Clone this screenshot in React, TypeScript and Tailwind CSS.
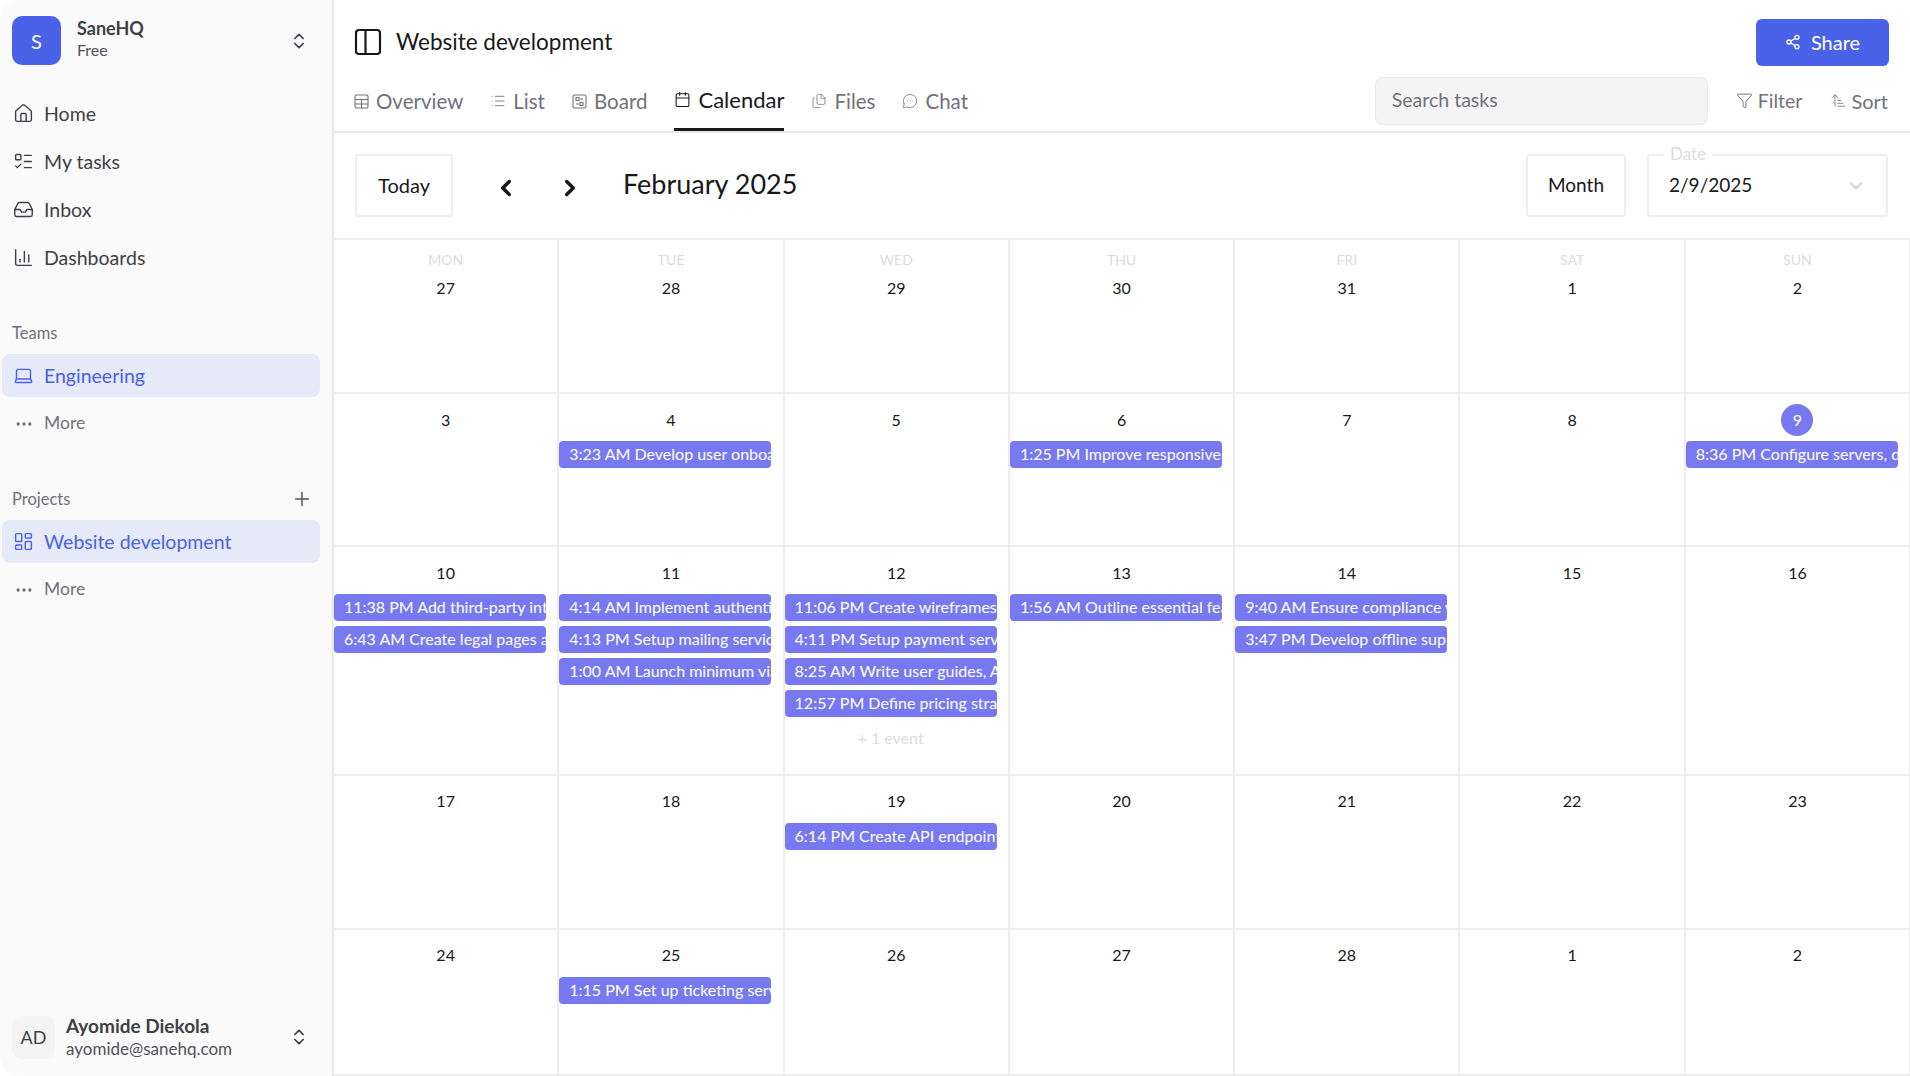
import { House, ListTodo, Inbox, ChartColumn, Laptop, LayoutDashboard, ChevronsUpDown, Ellipsis, Plus, List, Calendar, Files, MessageCircleMore, Share2, Funnel, ArrowUpNarrowWide, ChevronLeft, ChevronRight, ChevronDown } from "lucide-react";

const font = "font-['Lato','Open_Sans',sans-serif]";

function NavItem({ icon, label, active, muted }: { icon: React.ReactNode; label: string; active?: boolean; muted?: boolean }) {
  return (
    <div className={`mx-[2px] h-[43px] w-[318px] flex items-center gap-[10px] pl-[11px] rounded-[8px] ${active ? "bg-[#e5e9f8] text-[#4a62e8] text-[19.5px]" : muted ? "text-[#71717a] text-[17.5px]" : "text-[#3f3f46] text-[19.5px]"}`}>
      <span className="w-[21px] flex justify-center">{icon}</span>
      <span>{label}</span>
    </div>
  );
}

const Ev = ({ t }: { t: string }) => (
  <div className="h-[27px] w-[212px] shrink-0 rounded-[4px] bg-[#7879f1] text-white text-[16px] leading-[26px] pl-[10px] overflow-hidden whitespace-nowrap">{t}</div>
);

type Cell = { d: number; wd?: string; ev?: string[]; more?: boolean; today?: boolean };
const cells: Cell[] = [
  { d: 27, wd: "MON" }, { d: 28, wd: "TUE" }, { d: 29, wd: "WED" }, { d: 30, wd: "THU" }, { d: 31, wd: "FRI" }, { d: 1, wd: "SAT" }, { d: 2, wd: "SUN" },
  { d: 3 }, { d: 4, ev: ["3:23 AM Develop user onboarding"] }, { d: 5 }, { d: 6, ev: ["1:25 PM Improve responsiveness"] }, { d: 7 }, { d: 8 }, { d: 9, today: true, ev: ["8:36 PM Configure servers, domains"] },
  { d: 10, ev: ["11:38 PM Add third-party integrations", "6:43 AM Create legal pages and terms"] },
  { d: 11, ev: ["4:14 AM Implement authentication", "4:13 PM Setup mailing service", "1:00 AM Launch minimum viable"] },
  { d: 12, more: true, ev: ["11:06 PM Create wireframes, mockups", "4:11 PM Setup payment service", "8:25 AM Write user guides, API docs", "12:57 PM Define pricing strategy"] },
  { d: 13, ev: ["1:56 AM Outline essential features"] },
  { d: 14, ev: ["9:40 AM Ensure compliance with", "3:47 PM Develop offline support"] },
  { d: 15 }, { d: 16 },
  { d: 17 }, { d: 18 }, { d: 19, ev: ["6:14 PM Create API endpoints"] }, { d: 20 }, { d: 21 }, { d: 22 }, { d: 23 },
  { d: 24 }, { d: 25, ev: ["1:15 PM Set up ticketing service"] }, { d: 26 }, { d: 27 }, { d: 28 }, { d: 1 }, { d: 2 },
];

function Tab({ icon, label, active }: { icon: React.ReactNode; label: string; active?: boolean }) {
  return (
    <div className={`flex items-center gap-[7px] h-[54px] ${active ? "text-[22px] text-[#18181b] border-b-[3px] border-[#18181b] pb-[7px]" : "text-[20.5px] text-[#71717a] pb-[6px]"}`}>
      {icon}
      <span>{label}</span>
    </div>
  );
}

const I = "shrink-0";

export default function App() {
  return (
    <div className={`w-[1910px] h-[1076px] overflow-hidden flex bg-white ${font}`}>
      <aside className="w-[334px] shrink-0 h-full bg-[#fafafa] border-r-[2px] border-[#e8e8e8] rounded-l-[20px] flex flex-col">
        <div className="flex items-center pl-[12px] pr-[23px] pt-[16px]">
          <div className="w-[49px] h-[49px] rounded-[10px] bg-[#4a62e8] text-white text-[20px] flex items-center justify-center">S</div>
          <div className="ml-[16px] flex-1 leading-[22px] -mt-[4px]">
            <div className="text-[18px] font-bold text-[#3f3f46]">SaneHQ</div>
            <div className="text-[16px] text-[#52525b]">Free</div>
          </div>
          <ChevronsUpDown size={20} className="text-[#3f3f46]" />
        </div>
        <nav className="mt-[27px] flex flex-col gap-[5px]">
          <NavItem icon={<House size={21} strokeWidth={1.6} />} label="Home" />
          <NavItem icon={<ListTodo size={21} strokeWidth={1.6} />} label="My tasks" />
          <NavItem icon={<Inbox size={21} strokeWidth={1.6} />} label="Inbox" />
          <NavItem icon={<ChartColumn size={21} strokeWidth={1.6} />} label="Dashboards" />
        </nav>
        <div className="mt-[44px] pl-[12px] text-[16.5px] leading-[20px] text-[#71717a]">Teams</div>
        <div className="mt-[11px] flex flex-col gap-[5px]">
          <NavItem active icon={<Laptop size={21} strokeWidth={1.6} />} label="Engineering" />
          <NavItem muted icon={<Ellipsis size={20} />} label="More" />
        </div>
        <div className="mt-[44px] pl-[12px] pr-[19px] flex items-center justify-between text-[16.5px] leading-[20px] text-[#71717a] h-[20px]">
          <span>Projects</span>
          <Plus size={22} strokeWidth={1.6} className="text-[#52525b]" />
        </div>
        <div className="mt-[11px] flex flex-col gap-[5px]">
          <NavItem active icon={<LayoutDashboard size={21} strokeWidth={1.6} />} label="Website development" />
          <NavItem muted icon={<Ellipsis size={20} />} label="More" />
        </div>
        <div className="mt-auto mb-[16px] flex items-center pl-[12px] pr-[23px]">
          <div className="w-[43px] h-[43px] rounded-[10px] bg-[#f4f4f5] text-[#3f3f46] text-[18px] flex items-center justify-center">AD</div>
          <div className="ml-[11px] flex-1 leading-[23px]">
            <div className="text-[19px] font-bold text-[#3f3f46]">Ayomide Diekola</div>
            <div className="text-[17px] text-[#52525b]">ayomide@sanehq.com</div>
          </div>
          <ChevronsUpDown size={20} className="text-[#3f3f46]" />
        </div>
      </aside>

      <main className="flex-1 min-w-0 flex flex-col">
        <header className="h-[133px] shrink-0 border-b-[2px] border-[#e8e8e8] flex flex-col pl-[20px] pr-[21px]">
          <div className="h-[77px] shrink-0 flex items-start justify-between pt-[19px]">
            <div className="flex items-center gap-[14px] h-[46px] text-[#18181b]">
              <svg width="28" height="28" viewBox="0 0 28 28" fill="none" stroke="currentColor" strokeWidth="2.2"><rect x="2" y="2" width="24" height="24" rx="3" /><path d="M11.5 2v24" /></svg>
              <span className="text-[22.5px]">Website development</span>
            </div>
            <button className="w-[133px] h-[47px] rounded-[6px] bg-[#4a62e8] text-white text-[20px] flex items-center justify-center gap-[10px] pb-[2px]"><Share2 size={16} />Share</button>
          </div>
          <div className="flex items-start justify-between">
            <div className="flex gap-[27px] items-start">
              <Tab icon={<svg width="15" height="15" viewBox="0 0 15 15" fill="none" stroke="currentColor" strokeWidth="1.1"><rect x="1" y="1" width="13" height="13" rx="1.5" /><path d="M1 5.5h13M1 10h13M7.5 5.5V14" /></svg>} label="Overview" />
              <Tab icon={<List size={16} strokeWidth={1.3} className={I} />} label="List" />
              <Tab icon={<svg width="15" height="15" viewBox="0 0 15 15" fill="none" stroke="currentColor" strokeWidth="1.1"><rect x="1" y="1" width="13" height="13" rx="1.5" /><rect x="4" y="3.5" width="3" height="3" /><rect x="8" y="8.5" width="3" height="3" /><path d="M8 5h3M4 10h3" /></svg>} label="Board" />
              <Tab active icon={<Calendar size={17} strokeWidth={1.5} className={I} />} label="Calendar" />
              <Tab icon={<Files size={16} strokeWidth={1.2} className={I} />} label="Files" />
              <Tab icon={<MessageCircleMore size={16} strokeWidth={1.2} className={I} />} label="Chat" />
            </div>
            <div className="flex items-center pr-[1px]">
              <input readOnly placeholder="Search tasks" className="w-[333px] h-[48px] rounded-[8px] bg-[#f4f4f5] border border-[#e8e8e8] px-[16px] pb-[4px] text-[19.5px] placeholder:text-[#71717a] outline-none" />
              <div className="ml-[28px] flex items-center gap-[5px] text-[19.5px] text-[#71717a] pb-[1px]"><Funnel size={17} strokeWidth={1.4} />Filter</div>
              <div className="ml-[28px] flex items-center gap-[4px] text-[20px] text-[#71717a] pb-[1px]"><ArrowUpNarrowWide size={17} strokeWidth={1.2} />Sort</div>
            </div>
          </div>
        </header>

        <div className="h-[105px] shrink-0 flex items-center pl-[21px] pr-[22px]">
          <button className="w-[98px] h-[63px] rounded-[4px] border-2 border-[#eeeeee] text-[20px] text-[#18181b] pb-[1px]">Today</button>
          <ChevronLeft size={26} strokeWidth={3.2} className="ml-[40px] mt-[4px] text-[#18181b]" />
          <ChevronRight size={26} strokeWidth={3.2} className="ml-[38px] mt-[4px] text-[#18181b]" />
          <span className="ml-[40px] text-[27px] text-[#18181b] pb-[3px]">February 2025</span>
          <button className="ml-auto w-[100px] h-[63px] rounded-[4px] border-2 border-[#eeeeee] text-[19px] text-[#18181b] pb-[1px]">Month</button>
          <div className="relative ml-[21px] w-[241px] h-[63px] rounded-[4px] border-2 border-[#eeeeee] flex items-center pl-[20px] pr-[20px] text-[19px] text-[#18181b] justify-between">
            <span className="pb-[1px]">2/9/2025</span>
            <ChevronDown size={20} strokeWidth={3} className="text-[#ddd9e3]" />
            <span className="absolute -top-[12px] left-[15px] px-[6px] bg-white text-[17px] leading-[20px] text-[#dcdcdc]">Date</span>
          </div>
        </div>

        <div className="flex-1 min-h-0 grid grid-cols-[repeat(7,225.3px)] grid-rows-[154px_153px_229px_154px_1fr] border-t-[2px] border-[#eeeeee]">
          {cells.map((c, i) => (
            <div key={i} className="border-r-[2px] border-b-[2px] border-[#eeeeee] overflow-hidden flex flex-col items-start">
              {c.wd && <div className="w-full text-center text-[14px] leading-[18px] text-[#dcdcdc] mt-[11px]">{c.wd}</div>}
              <div className={`w-full flex justify-center ${c.wd ? "mt-[3px]" : i >= 21 ? "mt-[9px]" : "mt-[10px]"} text-[16px]`}>
                <span className={`w-[32px] h-[32px] rounded-full flex items-center justify-center ${c.today ? "bg-[#7879f1] text-white" : "text-[#18181b]"}`}>{c.d}</span>
              </div>
              {c.ev && (
                <div className={`${i >= 21 ? "mt-[6px]" : "mt-[5px]"} flex flex-col gap-[5px]`}>
                  {c.ev.map((t) => <Ev key={t} t={t} />)}
                </div>
              )}
              {c.more && <div className="mt-[9px] w-[212px] text-center text-[16px] text-[#dcdcdc]">+ 1 event</div>}
            </div>
          ))}
        </div>
      </main>
    </div>
  );
}
